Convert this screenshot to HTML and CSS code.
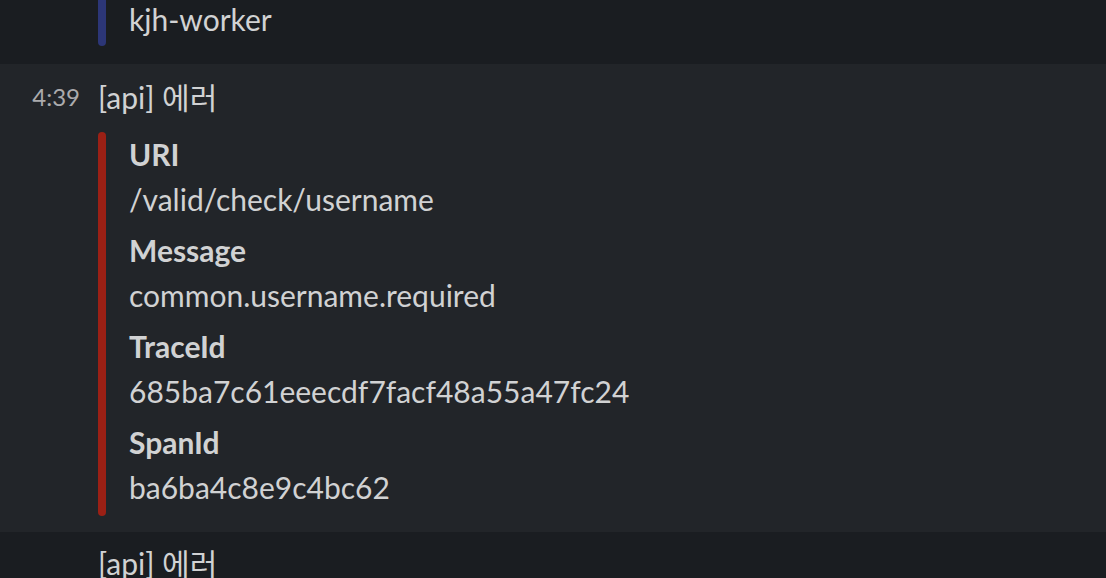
FILE: index.html
```html
<!DOCTYPE html>
<html lang="ko">
<head>
<meta charset="utf-8">
<title>Slack messages</title>
<link rel="stylesheet" href="styles.css">
</head>
<body>
<div class="feed">
  <div class="row row-prev">
    <div class="gutter"></div>
    <div class="content">
      <div class="attachment">
        <div class="bar bar-blue"></div>
        <div class="att-body att-body-cut">
          <div class="value">kjh-worker</div>
        </div>
      </div>
    </div>
  </div>

  <div class="row row-hover">
    <div class="gutter"><span class="time">4:39</span></div>
    <div class="content">
      <div class="msg">[api] 에러</div>
      <div class="attachment att-gap">
        <div class="bar bar-red"></div>
        <div class="att-body">
          <div class="field">
            <div class="label">URI</div>
            <div class="value">/valid/check/username</div>
          </div>
          <div class="field">
            <div class="label">Message</div>
            <div class="value">common.username.required</div>
          </div>
          <div class="field">
            <div class="label">TraceId</div>
            <div class="value">685ba7c61eeecdf7facf48a55a47fc24</div>
          </div>
          <div class="field">
            <div class="label">SpanId</div>
            <div class="value">ba6ba4c8e9c4bc62</div>
          </div>
        </div>
      </div>
    </div>
  </div>

  <div class="row row-next">
    <div class="gutter"></div>
    <div class="content">
      <div class="msg">[api] 에러</div>
    </div>
  </div>
</div>
</body>
</html>
```

FILE: styles.css
```css
html, body {
  margin: 0;
  padding: 0;
  height: 100%;
  overflow: hidden;
}
body {
  background: #1a1d21;
  color: #d1d2d3;
  font-family: Lato, "Noto Sans CJK KR", sans-serif;
  font-size: 30px;
}
.feed {
  display: flex;
  flex-direction: column;
}
.row {
  display: flex;
  gap: 18px;
}
.row-prev {
  height: 64px;
  overflow: hidden;
  align-items: flex-start;
}
.row-hover {
  background: #222529;
  padding: 14px 0 16px 0;
}
.row-next {
  padding-top: 12px;
}
.gutter {
  width: 80px;
  flex: none;
  display: flex;
  justify-content: flex-end;
}
.time {
  font-size: 24px;
  color: #ababad;
  line-height: 38px;
}
.content {
  flex: 1;
  display: flex;
  flex-direction: column;
}
.msg {
  line-height: 38px;
}
.attachment {
  display: flex;
}
.att-gap {
  margin-top: 16px;
}
.bar {
  width: 8px;
  flex: none;
  border-radius: 4px;
}
.bar-blue {
  background: #2c3677;
  margin-top: -6px;
}
.bar-red {
  background: #9b2015;
}
.att-body {
  padding: 0 0 6px 23px;
  display: flex;
  flex-direction: column;
  gap: 6px;
}
.att-body-cut {
  margin-top: -3px;
  padding-bottom: 4px;
}
.label {
  font-weight: 700;
  line-height: 45px;
}
.value {
  line-height: 45px;
}
```
